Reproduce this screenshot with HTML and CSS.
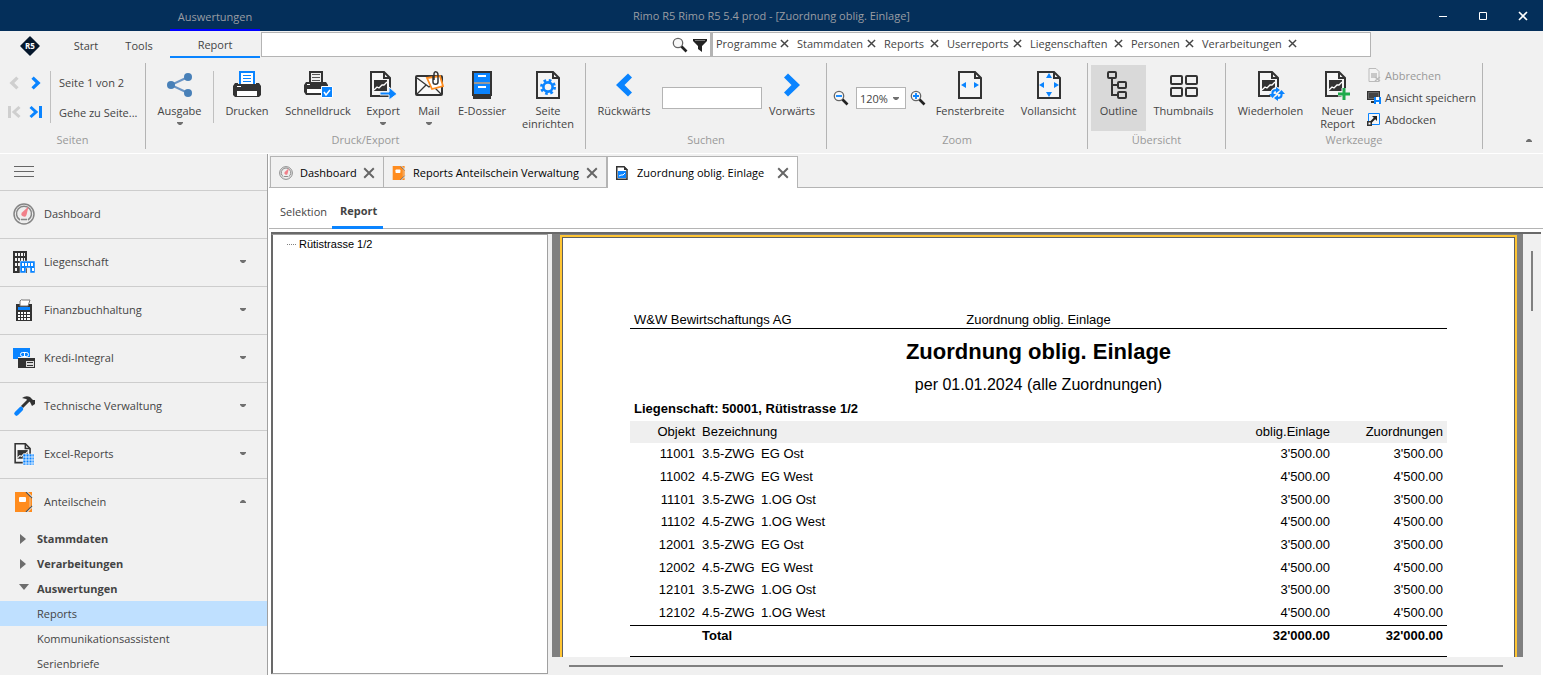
FILE: index.html
```html
<!DOCTYPE html>
<html lang="de">
<head>
<meta charset="utf-8">
<title>Rimo R5 Rimo R5 5.4 prod - [Zuordnung oblig. Einlage]</title>
<link rel="stylesheet" href="styles.css">
</head>
<body>
<svg class="sprite" aria-hidden="true">
  <symbol id="caret-down" viewBox="0 0 6 4"><path d="M0 0h6v1L4 3H2L0 1z" fill="#707070"/></symbol>
  <symbol id="caret-up" viewBox="0 0 6 4"><path d="M0 3h6V2L4 0H2L0 2z" fill="#707070"/></symbol>
  <symbol id="cross" viewBox="0 0 10 10"><path d="M1 1l8 8M9 1L1 9" stroke="currentColor" stroke-width="1.6" fill="none"/></symbol>
  <symbol id="chev" viewBox="0 0 28 28"><path d="M6 6.500 10 2.500 22 14 10 25.500 6 21.500 13.500 14z" fill="currentColor"/></symbol>
  <symbol id="doc-chart" viewBox="0 0 28 28">
    <path d="M4 1h13l6 6v18H4z" fill="#f5f5f5" stroke="#333" stroke-width="2"/>
    <path d="M17 1v6h6" fill="none" stroke="#333" stroke-width="2"/>
    <path d="M7 9h13v11H7z" fill="#333"/>
    <path d="M7 19l3-3 2 1 3-3 2 0 3-3" fill="none" stroke="#fff" stroke-width="1.300"/>
  </symbol>
  <symbol id="gauge" viewBox="0 0 22 22">
    <circle cx="11" cy="11" r="10" fill="#eee" stroke="#858585" stroke-width="1.500"/>
    <path d="M7 17A7.500 7.500 0 1 1 15 17" fill="none" stroke="#858585" stroke-width="1.500"/>
    <path d="M8 16.500h6" stroke="#858585" stroke-width="1.500"/>
    <path d="M15.500 3.500 13.500 12a2.600 2.600 0 1 1-4.500-2.500z" fill="#f1808a"/>
  </symbol>
  <symbol id="folder" viewBox="0 0 18 20">
    <path d="M0 0h11l6 6v8l-6 6H0z" fill="#ff8c1e"/>
    <path d="M13 0h4v4zM13 20h4v-4z" fill="#ff8c1e"/>
    <path d="M11 0l6 6M11 20l6-6" stroke="#555" stroke-width="1.200"/>
    <path d="M15 5v10" stroke="#e8c39c" stroke-width="1"/>
    <rect x="4" y="5" width="7" height="5" rx="1" fill="#fff"/>
  </symbol>
  <symbol id="magnifier" viewBox="0 0 16 16">
    <circle cx="6" cy="6" r="4.700" fill="#f8f8f8" stroke="#666" stroke-width="1.300"/>
    <path d="M9.500 9.500l5 5" stroke="#222" stroke-width="2.600"/>
  </symbol>
  <symbol id="page" viewBox="0 0 28 28">
    <path d="M3 1h16l6 6v20H3z" fill="#f5f5f5" stroke="#333" stroke-width="2"/>
    <path d="M19 1v6h6" fill="none" stroke="#333" stroke-width="2"/>
  </symbol>
</svg>

<div class="app">
  <header class="titlebar">
    <div class="context"><span class="context-label">Auswertungen</span></div>
    <h1 class="app-title">Rimo R5 Rimo R5 5.4 prod - [Zuordnung oblig. Einlage]</h1>
    <div class="window-buttons">
      <button aria-label="Minimieren"><svg width="10" height="10"><path d="M1 5.500h8" stroke="#fff"/></svg></button>
      <button aria-label="Maximieren"><svg width="10" height="10"><path d="M1.500 1.500h7v7h-7z" stroke="#fff" fill="none"/></svg></button>
      <button aria-label="Schliessen"><svg width="10" height="10"><use href="#cross"/></svg></button>
    </div>
  </header>

  <section class="menu">
    <span class="logo"><svg width="20" height="20" viewBox="0 0 20 20"><path d="M10 1l9 9-9 9-9-9z" fill="#06182c" stroke="#06182c" stroke-width="1.500" stroke-linejoin="round"/><text x="10" y="13" text-anchor="middle" class="logo-text">R5</text></svg></span>
    <nav class="menu-tabs">
      <button class="menu-tab start">Start</button>
      <button class="menu-tab tools">Tools</button>
      <button class="menu-tab report active">Report</button>
    </nav>
    <div class="search">
      <input type="text" aria-label="Suche">
      <button aria-label="Suchen"><svg width="16" height="16"><use href="#magnifier"/></svg></button>
      <button aria-label="Filter"><svg width="14" height="14"><path d="M0 1h14v2L9 8v6l-4-3V8L0 3z" fill="#222"/><path d="M2 2.500h10" stroke="#777"/></svg></button>
    </div>
    <div class="filters">
      <span class="chip">Programme<button aria-label="Programme entfernen"><svg width="9" height="9"><use href="#cross"/></svg></button></span>
      <span class="chip">Stammdaten<button aria-label="Stammdaten entfernen"><svg width="9" height="9"><use href="#cross"/></svg></button></span>
      <span class="chip">Reports<button aria-label="Reports entfernen"><svg width="9" height="9"><use href="#cross"/></svg></button></span>
      <span class="chip">Userreports<button aria-label="Userreports entfernen"><svg width="9" height="9"><use href="#cross"/></svg></button></span>
      <span class="chip">Liegenschaften<button aria-label="Liegenschaften entfernen"><svg width="9" height="9"><use href="#cross"/></svg></button></span>
      <span class="chip">Personen<button aria-label="Personen entfernen"><svg width="9" height="9"><use href="#cross"/></svg></button></span>
      <span class="chip">Verarbeitungen<button aria-label="Verarbeitungen entfernen"><svg width="9" height="9"><use href="#cross"/></svg></button></span>
    </div>
  </section>

  <section class="ribbon">
    <div class="group">
      <div class="tools-row pages">
        <div class="pager">
          <button class="off" aria-label="Zurück"><svg class="flip" width="16" height="16"><use href="#chev"/></svg></button>
          <button aria-label="Weiter"><svg width="16" height="16"><use href="#chev"/></svg></button>
          <button class="off" aria-label="Erste Seite"><svg class="flip" width="14" height="14"><path d="M1.500 2 7 7l-5.500 5M11.500 1v12" stroke="currentColor" stroke-width="3" fill="none"/></svg></button>
          <button aria-label="Letzte Seite"><svg width="14" height="14"><path d="M1.500 2 7 7l-5.500 5M11.500 1v12" stroke="currentColor" stroke-width="3" fill="none"/></svg></button>
        </div>
        <div class="page-info"><span>Seite 1 von 2</span><button>Gehe zu Seite...</button></div>
      </div>
      <h2>Seiten</h2>
    </div>

    <div class="group">
      <div class="tools-row print">
        <button class="tool"><svg width="28" height="28"><path d="M22 6 5 14l17 8" stroke="#6a94c4" stroke-width="2" fill="none"/><g fill="#4880b8"><circle cx="22" cy="6" r="4"/><circle cx="5" cy="14" r="4"/><circle cx="22" cy="22" r="4"/></g></svg><span>Ausgabe</span><svg class="caret" width="6" height="4"><use href="#caret-down"/></svg></button>
        <i class="divider"></i>
        <button class="tool"><svg width="28" height="28"><path d="M7 13V1h14v12" fill="#fff" stroke="#0a84ff" stroke-width="2"/><path d="M10 4.500h8M10 7.500h8M10 10.500h8" stroke="#0a84ff"/><path d="M2 12h3v1h18v-1h3l2 3v9l-2 2H2l-2-2v-9z" fill="#333"/><path d="M4 20h20v5H4z" fill="#fff"/><path d="M4 15h4v1H4z" fill="#fff"/></svg><span>Drucken</span></button>
        <button class="tool"><svg width="28" height="28"><path d="M6 11V1h12v10" fill="#eee" stroke="#333" stroke-width="2"/><path d="M8 3.500h8M8 6.500h8M8 9.500h8" stroke="#555"/><path d="M2 11h20l2 3v7l-2 3H2l-2-3v-7z" fill="#333"/><path d="M3 18h17v4H3z" fill="#fff"/><path d="M3 13h3v1H3z" fill="#fff"/><path d="M17.500 15.500h11v11h-11z" fill="#0a84ff" stroke="#fff"/><path d="M20 21l2 3 4-5" stroke="#fff" stroke-width="1.500" fill="none"/></svg><span>Schnelldruck</span></button>
        <button class="tool"><svg width="28" height="28"><use href="#doc-chart" x="-2" width="28" height="28"/><path d="M11 21h9v-5l8 7-8 6v-5h-9z" fill="#0a84ff" stroke="#f1f1f1"/></svg><span>Export</span><svg class="caret" width="6" height="4"><use href="#caret-down"/></svg></button>
        <button class="tool"><svg width="28" height="28"><rect x="1" y="5" width="26" height="19" rx="1" fill="#f8f8f8" stroke="#333" stroke-width="2"/><path d="M2 7l12 9L26 7M2 23l9-9M26 23l-9-9" stroke="#333" stroke-width="1.300" fill="none"/><path d="M12 7l13-2 3 10-11 3z" fill="#fff" stroke="#ff8c1e" stroke-width="1.800"/><path d="M18 5v6c0 3 5 3 5 0V4c0-4-4-4-4-1v6" fill="none" stroke="#333" stroke-width="1.500"/></svg><span>Mail</span><svg class="caret" width="6" height="4"><use href="#caret-down"/></svg></button>
        <button class="tool"><svg width="28" height="28"><path d="M4 0h20v25h-1v3H5v-3H4z" fill="#333"/><path d="M6 2h16v9H6zM6 13h16v10H6z" fill="#0a84ff"/><path d="M6 12h16" stroke="#fff"/><path d="M10 5h8M10 16h8" stroke="#fff" stroke-width="2"/></svg><span>E-Dossier</span></button>
        <button class="tool"><svg width="28" height="28"><use href="#page" width="28" height="28"/><circle cx="14" cy="16" r="6.500" fill="none" stroke="#0a84ff" stroke-width="3" stroke-dasharray="2.550 2.550"/><circle cx="14" cy="16" r="4.600" fill="none" stroke="#0a84ff" stroke-width="2.600"/></svg><span>Seite<br>einrichten</span></button>
      </div>
      <h2>Druck/Export</h2>
    </div>

    <div class="group">
      <div class="tools-row find">
        <button class="tool blue"><svg class="flip" width="28" height="28"><use href="#chev"/></svg><span>Rückwärts</span></button>
        <input class="find-box" type="text" aria-label="Suchtext">
        <button class="tool blue"><svg width="28" height="28"><use href="#chev"/></svg><span>Vorwärts</span></button>
      </div>
      <h2>Suchen</h2>
    </div>

    <div class="group">
      <div class="tools-row zoom">
        <div class="zoom-set">
          <button aria-label="Verkleinern"><svg width="16" height="16"><use href="#magnifier"/><path d="M3 6h6" stroke="#0a84ff" stroke-width="1.800"/></svg></button>
          <span class="select"><select aria-label="Zoomstufe"><option>120%</option></select><svg class="caret" width="6" height="4"><use href="#caret-down"/></svg></span>
          <button aria-label="Vergrössern"><svg width="16" height="16"><use href="#magnifier"/><path d="M3 6h6M6 3v6" stroke="#0a84ff" stroke-width="1.800"/></svg></button>
        </div>
        <button class="tool"><svg width="28" height="28"><use href="#page" width="28" height="28"/><path d="M5 14l5-3v6zM23 14l-5-3v6z" fill="#0a84ff"/></svg><span>Fensterbreite</span></button>
        <button class="tool"><svg width="28" height="28"><use href="#page" width="28" height="28"/><path d="M4 14l5-3v6zM24 14l-5-3v6zM14 2l3 5h-6zM14 26l3-5h-6z" fill="#0a84ff"/></svg><span>Vollansicht</span></button>
      </div>
      <h2>Zoom</h2>
    </div>

    <div class="group">
      <div class="tools-row view">
        <button class="tool pressed"><svg width="28" height="28" fill="none" stroke="#333" stroke-width="2"><path d="M7 7v17h6M7 14h6"/><rect x="3" y="1" width="8" height="6" rx="1"/><rect x="13" y="11" width="8" height="6" rx="1"/><rect x="13" y="21" width="8" height="6" rx="1"/></svg><span>Outline</span></button>
        <button class="tool"><svg width="28" height="28" fill="none" stroke="#333" stroke-width="2"><rect x="1" y="5" width="11" height="8" rx="1"/><rect x="16" y="5" width="11" height="8" rx="1"/><rect x="1" y="17" width="11" height="8" rx="1"/><rect x="16" y="17" width="11" height="8" rx="1"/></svg><span>Thumbnails</span></button>
      </div>
      <h2>Übersicht</h2>
    </div>

    <div class="group">
      <div class="tools-row work">
        <button class="tool"><svg width="28" height="28"><use href="#doc-chart" x="-2" width="28" height="28"/><circle cx="20" cy="23" r="7" fill="#f1f1f1"/><path d="M15.500 25v-3q0-3 4-3M24.500 21v3q0 3-4 3" stroke="#0a84ff" stroke-width="2.200" fill="none"/><path d="M12 23h7l-3.500 4zM21 23h7l-3.500-4zM19 16l4 3-4 3zM21 24v6l-4-3z" fill="#0a84ff"/></svg><span>Wiederholen</span></button>
        <button class="tool"><svg width="28" height="28"><use href="#doc-chart" x="-2" width="28" height="28"/><path d="M14 23h12M20 17v11" stroke="#f1f1f1" stroke-width="5"/><path d="M14 23h12M20 17v12" stroke="#1faa4c" stroke-width="3"/></svg><span>Neuer<br>Report</span></button>
        <div class="small-tools">
          <button class="small off"><svg width="14" height="14"><path d="M2 .500h7l3 3v10H2z" fill="#f3f3f3" stroke="#bbb"/><path d="M4 5h6v5H4z" fill="#c8c8c8"/><path d="M8 9l5 4M13 9l-5 4" stroke="#bbb" stroke-width="1.500"/></svg>Abbrechen</button>
          <button class="small"><svg width="14" height="14"><path d="M0 1h13v9H0z" fill="#333"/><path d="M1.500 2.500h10v6h-10z" fill="#444" stroke="#999" stroke-width=".500"/><path d="M4 12h6" stroke="#333" stroke-width="2"/><path d="M7 7h7v7H7z" fill="#0a84ff"/><path d="M9 7h3v3H9zM9 12h3v2H9z" fill="#fff"/></svg>Ansicht speichern</button>
          <button class="small"><svg width="14" height="14"><path d="M1.500 1.500h11v11h-11z" fill="#f5f5f5" stroke="#0a84ff"/><path d="M0 9h5v5H0z" fill="#333"/><path d="M1.500 10.500h2v2h-2z" fill="#fff"/><path d="M4 10l4-4" stroke="#222" stroke-width="2"/><path d="M5 4h5v5z" fill="#222"/></svg>Abdocken</button>
        </div>
      </div>
      <h2>Werkzeuge</h2>
    </div>
    <button class="collapse" aria-label="Menüband reduzieren"><svg width="6" height="4"><use href="#caret-up"/></svg></button>
  </section>

  <div class="body">
    <aside class="sidebar">
      <button class="burger" aria-label="Menü"><i></i><i></i><i></i></button>
      <button class="nav"><svg width="22" height="22"><use href="#gauge"/></svg><span>Dashboard</span></button>
      <button class="nav"><svg width="22" height="22"><path d="M0 0h14v22H0z" fill="#333"/><path d="M2 2h2v3H2zM5 2h2v3H5zM8 2h2v3H8zM11 2h1v3h-1zM2 7h2v3H2zM5 7h2v3H5zM8 7h2v3H8zM11 7h1v3h-1zM2 12h2v3H2zM5 12h2v3H5zM2 17h2v3H2z" fill="#f4f4f4"/><path d="M7 10h15v12h-5v-5h-4v5H7z" fill="#0a84ff" stroke="#f1f1f1" stroke-width=".500"/><path d="M9 12h2v3H9zM12 12h2v3h-2zM15 12h2v3h-2zM18 12h2v3h-2zM9 17h2v3H9zM19 17h2v3h-2z" fill="#fff"/></svg><span>Liegenschaft</span><svg class="caret" width="6" height="4"><use href="#caret-down"/></svg></button>
      <button class="nav"><svg width="22" height="22"><path d="M3 5h16v17H3z" fill="#333"/><path d="M7 7V2q1-2 3-1h7l-2 6z" fill="#fff" stroke="#777"/><path d="M5 8h12v3H5z" fill="#0a84ff"/><path d="M5 13h2v2H5zM8 13h2v2H8zM11 13h2v2h-2zM14 13h3v2h-3zM5 16h2v2H5zM8 16h2v2H8zM11 16h2v2h-2zM14 16h3v2h-3zM5 19h2v2H5zM8 19h2v2H8zM11 19h2v2h-2zM14 19h3v2h-3z" fill="#fff"/></svg><span>Finanzbuchhaltung</span><svg class="caret" width="6" height="4"><use href="#caret-down"/></svg></button>
      <button class="nav"><svg width="22" height="22"><path d="M5 11h17v10H5z" fill="#333"/><path d="M0 1h17v9H5v2H0z" fill="#0a84ff"/><rect x="7.500" y="5.500" width="8" height="4" rx="2" fill="none" stroke="#fff"/><path d="M11.500 5.500v4" stroke="#fff"/><path d="M13 14h8v6h-8z" fill="#ddd"/><path d="M14 15.500h6M14 18.500h6" stroke="#333"/></svg><span>Kredi-Integral</span><svg class="caret" width="6" height="4"><use href="#caret-down"/></svg></button>
      <button class="nav"><svg width="22" height="22"><path d="M9 12l8-8" stroke="#333" stroke-width="3"/><path d="M3.500 18.500 8 14" stroke="#0a84ff" stroke-width="4.500" stroke-linecap="round"/><path d="M9 3q4-3 8-1l3 3 2 0v4l-3 2-2-4-4-3z" fill="#333"/></svg><span>Technische Verwaltung</span><svg class="caret" width="6" height="4"><use href="#caret-down"/></svg></button>
      <button class="nav"><svg width="22" height="22"><use href="#doc-chart" x="-1" width="22" height="22"/><path d="M10 11h11v11H10z" fill="#0a84ff" stroke="#fff" stroke-width=".500"/><path d="M10 14h11M10 17h11M10 20h11M13 11v11M16 11v11M19 11v11" stroke="#fff" stroke-width=".800"/></svg><span>Excel-Reports</span><svg class="caret" width="6" height="4"><use href="#caret-down"/></svg></button>
      <button class="nav last"><svg width="22" height="20"><use href="#folder"/></svg><span>Anteilschein</span><svg class="caret" width="6" height="4"><use href="#caret-up"/></svg></button>
      <ul class="tree">
        <li><button class="branch"><svg width="10" height="10"><path d="M1 0l6 5-6 5z" fill="#6e6e6e"/></svg>Stammdaten</button></li>
        <li><button class="branch"><svg width="10" height="10"><path d="M1 0l6 5-6 5z" fill="#6e6e6e"/></svg>Verarbeitungen</button></li>
        <li><button class="branch"><svg width="10" height="10"><path d="M0 0h10L5 6z" fill="#6e6e6e"/></svg>Auswertungen</button></li>
        <li><a class="leaf selected" href="#">Reports</a></li>
        <li><a class="leaf" href="#">Kommunikationsassistent</a></li>
        <li><a class="leaf" href="#">Serienbriefe</a></li>
      </ul>
    </aside>

    <main class="main">
      <div class="doc-tabs">
        <div class="doc-tab t1"><svg width="14" height="14"><use href="#gauge"/></svg><span>Dashboard</span><button aria-label="Dashboard schliessen"><svg width="12" height="12"><use href="#cross"/></svg></button></div>
        <div class="doc-tab t2"><svg width="14" height="14"><use href="#folder"/></svg><span>Reports Anteilschein Verwaltung</span><button aria-label="Reports schliessen"><svg width="12" height="12"><use href="#cross"/></svg></button></div>
        <div class="doc-tab t3 active"><svg width="12" height="14"><path d="M.750.750H8l3 3v9.500H.750z" fill="#fff" stroke="#333" stroke-width="1.500"/><path d="M8 0v4h4" fill="#333"/><path d="M2 5h8v7H2z" fill="#0a84ff"/><path d="M3 10l2-1 2 0 2-2" stroke="#fff" fill="none"/></svg><span>Zuordnung oblig. Einlage</span><button aria-label="Zuordnung schliessen"><svg width="12" height="12"><use href="#cross"/></svg></button></div>
      </div>
      <nav class="sub-tabs">
        <button>Selektion</button>
        <button class="active">Report</button>
      </nav>
      <div class="workspace">
        <div class="outline"><div class="outline-item"><i></i>Rütistrasse 1/2</div></div>
        <div class="viewer">
          <div class="canvas">
            <article class="sheet">
              <div class="sheet-head"><span>W&amp;W Bewirtschaftungs AG</span><span>Zuordnung oblig. Einlage</span></div>
              <h2>Zuordnung oblig. Einlage</h2>
              <p class="as-of">per 01.01.2024 (alle Zuordnungen)</p>
              <h3>Liegenschaft: 50001, Rütistrasse 1/2</h3>
              <table>
                <thead><tr><th class="obj">Objekt</th><th class="kind">Bezeichnung</th><th class="name"></th><th class="amount">oblig.Einlage</th><th class="assign">Zuordnungen</th></tr></thead>
                <tbody>
                  <tr><td>11001</td><td>3.5-ZWG</td><td>EG Ost</td><td>3'500.00</td><td>3'500.00</td></tr>
                  <tr><td>11002</td><td>4.5-ZWG</td><td>EG West</td><td>4'500.00</td><td>4'500.00</td></tr>
                  <tr><td>11101</td><td>3.5-ZWG</td><td>1.OG Ost</td><td>3'500.00</td><td>3'500.00</td></tr>
                  <tr><td>11102</td><td>4.5-ZWG</td><td>1.OG West</td><td>4'500.00</td><td>4'500.00</td></tr>
                  <tr><td>12001</td><td>3.5-ZWG</td><td>EG Ost</td><td>3'500.00</td><td>3'500.00</td></tr>
                  <tr><td>12002</td><td>4.5-ZWG</td><td>EG West</td><td>4'500.00</td><td>4'500.00</td></tr>
                  <tr><td>12101</td><td>3.5-ZWG</td><td>1.OG Ost</td><td>3'500.00</td><td>3'500.00</td></tr>
                  <tr><td>12102</td><td>4.5-ZWG</td><td>1.OG West</td><td>4'500.00</td><td>4'500.00</td></tr>
                </tbody>
                <tfoot><tr><td></td><td>Total</td><td></td><td>32'000.00</td><td>32'000.00</td></tr></tfoot>
              </table>
            </article>
          </div>
          <div class="scroll-y"><i></i></div>
          <div class="scroll-x"><i></i></div>
        </div>
      </div>
    </main>
  </div>
</div>
</body>
</html>
```

FILE: styles.css
```css
* { box-sizing: border-box; }
body { margin: 0; font: 11px/13px "Open Sans", "Noto Sans", sans-serif; color: #444; background: #f1f1f1; }
button { font: inherit; color: inherit; background: none; border: 0; padding: 0; margin: 0; }
input, select { font: inherit; color: inherit; border: 1px solid #b4b4b4; border-radius: 0; background: #fff; padding: 0; }
h1, h2, h3, p, ul { margin: 0; padding: 0; font: inherit; }
svg { flex: none; display: block; overflow: visible; }
.sprite { position: absolute; width: 0; height: 0; }
.flip { transform: scaleX(-1); }
.app { height: 100vh; display: flex; flex-direction: column; overflow: hidden; }

/* Title bar */
.titlebar { flex: none; height: 31px; background: #042f5a; color: #9a9da3; display: grid; grid-template-columns: 1fr auto 1fr; align-items: stretch; }
.context { padding-left: 170px; display: flex; }
.context-label { width: 90px; border-bottom: 2px solid #0000ff; text-align: center; line-height: 34px; height: 31px; }
.app-title { line-height: 32px; }
.window-buttons { display: flex; justify-content: flex-end; color: #fff; }
.window-buttons button { width: 40px; display: grid; place-items: center; }

/* Menu row */
.menu { flex: none; height: 29px; display: flex; align-items: flex-start; }
.logo { width: 60px; height: 29px; display: grid; place-items: center; }
.logo-text { fill: #fff; font-size: 8px; font-weight: 700; }
.menu-tabs { display: flex; width: 201px; }
.menu-tab { height: 27px; padding-top: 2px; }
.start { width: 52px; }
.tools { width: 54px; }
.report { width: 90px; margin-left: 4px; }
.menu-tab.active { border-bottom: 2px solid #0a84ff; }
.search, .filters { height: 25px; margin-top: 1px; background: #fff; border: 1px solid #b4b4b4; }
.search { width: 450px; display: flex; align-items: center; padding-right: 3px; gap: 5px; }
.search input { flex: 1; min-width: 0; border: 0; height: 21px; }
.filters { width: 660px; border-left-width: 2px; padding: 0 0 2px 3px; display: grid; grid-template-columns: 73px 79px 55px 75px 93px 63px 95px; column-gap: 8px; align-items: center; }
.chip { display: flex; align-items: center; justify-content: space-between; white-space: nowrap; }

/* Ribbon */
.ribbon { flex: none; height: 94px; padding-top: 3px; border-bottom: 1px solid #fff; display: flex; align-items: flex-start; }
.group { height: 86px; border-right: 1px solid #b4b4b4; display: flex; flex-direction: column; }
.group h2 { text-align: center; color: #999; line-height: 14px; }
.tools-row { flex: none; height: 70px; padding-top: 2px; display: flex; align-items: flex-start; }
.tool { height: 66px; padding-top: 6px; display: flex; flex-direction: column; align-items: center; white-space: nowrap; }
.tool span { margin-top: 5px; }
.tool .caret { margin-top: 5px; }
.tool.pressed { background: #d9d9d9; }
.blue, .pager { color: #0a84ff; }
.blue span { color: #444; }
.divider { width: 1px; height: 52px; margin-top: 6px; background: #c0c0c0; }
.pages { width: 145px; }
.pager { display: grid; grid-template-columns: 22px 22px; grid-auto-rows: 29px; width: 51px; height: 52px; margin-top: 6px; padding-left: 3px; border-right: 1px solid #c0c0c0; place-items: center; align-content: center; }
.off { color: #cfcfcf; }
.page-info { display: flex; flex-direction: column; align-items: flex-start; gap: 17px; padding: 11px 0 0 8px; white-space: nowrap; }
.print { display: grid; grid-template-columns: 67px 1px 66px 76px 54px 38px 68px 69px; }
.print .tool:last-child { padding-right: 5px; }
.find { display: grid; grid-template-columns: 76px 100px 64px; }
.find .tool:last-child { padding-right: 4px; }
.find-box { width: 100%; height: 22px; margin-top: 22px; }
.zoom { display: grid; grid-template-columns: 103px 80px 77px; }
.zoom-set { display: flex; align-items: center; gap: 4px; padding-left: 6px; height: 66px; }
.select { position: relative; width: 50px; margin-left: 3px; }
.select select { appearance: none; width: 100%; height: 22px; padding-left: 3px; }
.select .caret { position: absolute; right: 7px; top: 10px; }
.view { display: grid; grid-template-columns: 55px 75px; padding: 2px 4px 0 3px; }
.work { display: grid; grid-template-columns: 89px 45px 122px; }
.small-tools { display: flex; flex-direction: column; padding-left: 7px; }
.small { height: 22px; padding-bottom: 2px; display: flex; align-items: center; gap: 4px; white-space: nowrap; }
.small.off { color: #999; }
.collapse { margin: 76px 11px 0 auto; }

/* Sidebar */
.body { flex: 1; min-height: 0; display: flex; }
.sidebar { flex: none; width: 268px; border-right: 1px solid #a0a0a0; overflow: hidden; }
.burger { display: flex; flex-direction: column; justify-content: center; gap: 4px; width: 100%; height: 37px; padding: 0 0 2px 14px; border-bottom: 1px solid #cdcdcd; }
.burger i { width: 20px; height: 1px; background: #666; }
.nav { display: flex; align-items: center; gap: 9px; width: 100%; height: 48px; padding: 0 21px 2px 13px; border-bottom: 1px solid #cdcdcd; text-align: left; }
.nav span { flex: 1; }
.nav.last { border-bottom: 0; height: 47px; }
.tree { list-style: none; }
.branch { display: flex; align-items: center; gap: 8px; width: 100%; height: 25px; padding-left: 19px; font-weight: 700; }
.leaf { display: block; height: 25px; line-height: 25px; padding-left: 37px; color: inherit; text-decoration: none; }
.leaf.selected { background: #bfe0ff; }

/* Document area */
.main { flex: 1; min-width: 0; display: flex; flex-direction: column; background: #fff; padding-left: 1px; }
.doc-tabs { flex: none; height: 34px; padding: 2px 0 0 1px; background: #f1f1f1; border-bottom: 1px solid #b4b4b4; display: flex; align-items: flex-end; color: #000; }
.doc-tab { height: 31px; padding: 1px 8px 0; border: 1px solid #b4b4b4; border-bottom: 0; display: flex; align-items: center; white-space: nowrap; }
.doc-tab span { flex: 1; padding-left: 7px; }
.doc-tab button { color: #666; }
.t1 { width: 114px; }
.t2 { width: 223px; border-left: 0; }
.t3 { width: 191px; }
.t3 span { padding-left: 9px; }
.doc-tab.active { height: 32px; margin-bottom: -1px; background: #fff; padding-bottom: 1px; }
.sub-tabs { flex: none; height: 41px; padding-left: 3px; border-bottom: 1px solid #b4b4b4; display: flex; align-items: flex-end; }
.sub-tabs button { height: 34px; padding: 0 11px 2px 8px; width: 60px; margin-bottom: -1px; text-align: left; }
.sub-tabs button.active { width: 51px; padding: 0 8px; border-bottom: 3px solid #0a84ff; font-weight: 700; }
.workspace { flex: 1; min-height: 0; margin: 3px 2px 0 2px; display: flex; border-top: 2px solid #696969; background: #f0f0f0; }
.outline { flex: none; width: 277px; margin: 0 4px 1px 0; background: #fff; border: 1px solid #a0a0a0; border-left: 2px solid #696969; font: 11px/18px "Liberation Sans", Arial, sans-serif; color: #000; }
.outline-item { display: flex; align-items: center; gap: 3px; padding-left: 14px; }
.outline-item i { width: 9px; border-top: 1px dotted #808080; }
.viewer { flex: 1; min-width: 0; display: grid; grid-template: 1fr 18px / 1fr 18px; }
.canvas { overflow: hidden; min-height: 0; background: #808080; padding: 1px 6px 0 8px; }
.sheet { min-height: 600px; background: #fff; border: 2px solid #ffc533; outline: 1px solid #606060; outline-offset: -3px; padding: 75px 68px 0; font: 13px/15px "Liberation Sans", Arial, sans-serif; color: #000; }
.sheet-head { display: grid; grid-template-columns: 1fr auto 1fr; height: 17px; border-bottom: 1px solid #000; padding: 0 4px; }
.sheet h2 { margin-top: 10px; text-align: center; font-size: 22px; line-height: 26px; font-weight: 700; }
.as-of { margin-top: 11px; text-align: center; font-size: 16px; line-height: 18px; }
.sheet h3 { margin: 7px 0 5px 4px; font-weight: 700; }
.sheet table { width: 100%; border-collapse: collapse; table-layout: fixed; }
.sheet th, .sheet td { padding: 0 0 2px; height: 23px; text-align: left; font-weight: 400; white-space: nowrap; }
.sheet th { height: 22px; }
.sheet tbody tr:nth-child(3n) td { height: 22px; }
.sheet thead { background: #efefef; }
.obj { width: 65px; }
.kind { width: 66px; }
.amount { width: 120px; }
.assign { width: 117px; }
.sheet tr > :first-child, .sheet tr > :nth-child(n+4) { text-align: right; }
.sheet tr > :nth-child(2) { padding-left: 7px; }
.sheet tr > :last-child { padding-right: 4px; }
.sheet tfoot td { height: 31px; padding-bottom: 10px; font-weight: 700; border-top: 1px solid #000; border-bottom: 1px solid #000; }
.scroll-y i { display: block; width: 2px; height: 60px; margin: 17px 0 0 8px; background: #808080; }
.scroll-x { grid-column: 1 / -1; padding: 8px 38px 0 17px; }
.scroll-x i { display: block; height: 2px; background: #808080; }
```
